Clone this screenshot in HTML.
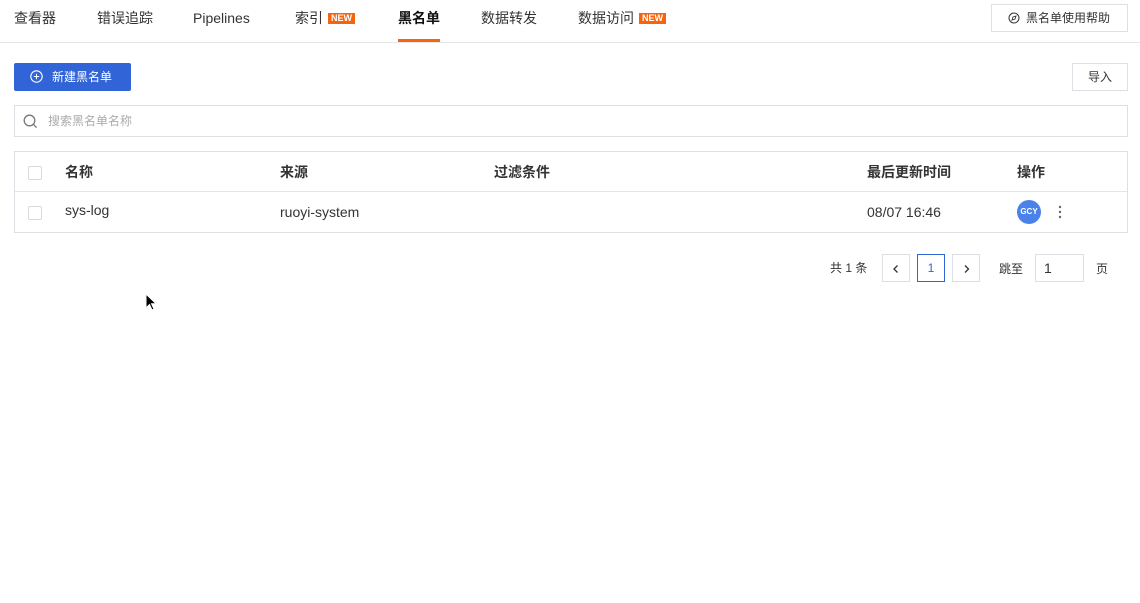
<!DOCTYPE html>
<html><head><meta charset="utf-8"><style>
*{box-sizing:border-box;margin:0;padding:0}
body{width:1140px;height:603px;background:#fff;font-family:"Liberation Sans","Noto Sans CJK SC",sans-serif;color:#222;position:relative;overflow:hidden;font-size:14px}
.a{position:absolute;line-height:20px}
.tab{position:absolute;top:8px;font-size:14px;color:#333;white-space:nowrap;line-height:20px;height:20px}
.new{display:inline-block;background:#f5640f;color:#fff;font-size:9px;font-weight:bold;padding:0 3px;line-height:11px;margin-left:5px;vertical-align:2px}
.box{position:absolute;border:1px solid #dcdfe3;background:#fff}
.cb{position:absolute;width:14px;height:14px;border:1px solid #d6d9dd;border-radius:2px;background:#fff}
</style></head><body>
<div class="tab" style="left:14px">查看器</div>
<div class="tab" style="left:97px">错误追踪</div>
<div class="tab" style="left:193px">Pipelines</div>
<div class="tab" style="left:295px">索引<span class="new">NEW</span></div>
<div class="tab" style="left:398px;font-weight:bold;color:#111">黑名单</div>
<div class="a" style="left:398px;top:39px;width:42px;height:3px;background:#f5640f"></div>
<div class="tab" style="left:481px">数据转发</div>
<div class="tab" style="left:578px">数据访问<span class="new">NEW</span></div>
<div class="a" style="left:0;top:42px;width:1140px;height:1px;background:#e3e5e8"></div>
<div class="box" style="left:991px;top:4px;width:137px;height:28px;font-size:12px;color:#333;line-height:26px;padding-left:16px"><svg width="12" height="12" viewBox="0 0 12 12" style="vertical-align:-2px;margin-right:6px"><circle cx="6" cy="6" r="5" fill="none" stroke="#333" stroke-width="1"/><path d="M8 4L5 5 4 8 7 7Z" fill="none" stroke="#333" stroke-width="0.9"/></svg>黑名单使用帮助</div>
<div class="a" style="left:14px;top:63px;width:117px;height:28px;background:#3164d6;border-radius:2px;color:#fff;font-size:12px;line-height:28px;padding-left:16px"><svg width="13" height="13" viewBox="0 0 13 13" style="vertical-align:-2px;margin-right:9px"><circle cx="6.5" cy="6.5" r="5.7" fill="none" stroke="#fff" stroke-width="1.1"/><path d="M6.5 3.8v5.4M3.8 6.5h5.4" stroke="#fff" stroke-width="1.1"/></svg>新建黑名单</div>
<div class="box" style="left:1072px;top:63px;width:56px;height:28px;font-size:12px;color:#333;text-align:center;line-height:26px">导入</div>
<div class="box" style="left:14px;top:105px;width:1114px;height:32px"><svg class="a" style="left:8px;top:8px" width="15" height="15" viewBox="0 0 15 15"><circle cx="6.5" cy="6.5" r="5.3" fill="none" stroke="#777" stroke-width="1.3"/><path d="M10.3 10.3l3.3 3.3" stroke="#777" stroke-width="1.3"/></svg><span class="a" style="left:33px;top:5px;font-size:12px;color:#aaa">搜索黑名单名称</span></div>
<div class="box" style="left:14px;top:151px;width:1114px;height:82px"></div>
<div class="a" style="left:15px;top:191px;width:1112px;height:1px;background:#e3e5e8"></div>
<div class="cb" style="left:28px;top:166px"></div>
<div class="cb" style="left:28px;top:206px"></div>
<div class="a" style="left:65px;top:162px;font-weight:bold;color:#333">名称</div>
<div class="a" style="left:280px;top:162px;font-weight:bold;color:#333">来源</div>
<div class="a" style="left:494px;top:162px;font-weight:bold;color:#333">过滤条件</div>
<div class="a" style="left:867px;top:162px;font-weight:bold;color:#333">最后更新时间</div>
<div class="a" style="left:1017px;top:162px;font-weight:bold;color:#333">操作</div>
<div class="a" style="left:65px;top:200px;color:#333">sys-log</div>
<div class="a" style="left:280px;top:202px;color:#333">ruoyi-system</div>
<div class="a" style="left:867px;top:202px;color:#333">08/07 16:46</div>
<div class="a" style="left:1017px;top:200px;width:24px;height:24px;border-radius:50%;background:#4a82ea;color:#fff;font-size:8px;font-weight:bold;text-align:center;line-height:24px">GCY</div>
<svg class="a" style="left:1058px;top:205px" width="4" height="14"><circle cx="2" cy="2" r="1.2" fill="#666"/><circle cx="2" cy="7" r="1.2" fill="#666"/><circle cx="2" cy="12" r="1.2" fill="#666"/></svg>
<div class="a" style="left:830px;top:258px;font-size:12px;color:#333">共 1 条</div>
<div class="box" style="left:882px;top:254px;width:28px;height:28px"><svg class="a" style="left:9px;top:9px" width="8" height="10"><path d="M5.5 1.5L2 5l3.5 3.5" fill="none" stroke="#333" stroke-width="1.3"/></svg></div>
<div class="box" style="left:917px;top:254px;width:28px;height:28px;border-color:#3164d6;color:#3164d6;font-size:12px;text-align:center;line-height:26px">1</div>
<div class="box" style="left:952px;top:254px;width:28px;height:28px"><svg class="a" style="left:10px;top:9px" width="8" height="10"><path d="M2 1.5L5.5 5 2 8.5" fill="none" stroke="#333" stroke-width="1.3"/></svg></div>
<div class="a" style="left:999px;top:259px;font-size:12px;color:#333">跳至</div>
<div class="box" style="left:1035px;top:254px;width:49px;height:28px;font-size:14px;color:#333;line-height:26px;padding-left:8px">1</div>
<div class="a" style="left:1096px;top:259px;font-size:12px;color:#333">页</div>
<svg class="a" style="left:145px;top:293px" width="12" height="18" viewBox="0 0 12 18"><path d="M1 1v14l3.5-3.5 2.5 5.5 2-1-2.5-5.3H11Z" fill="#000" stroke="#fff" stroke-width="1"/></svg>
</body></html>
